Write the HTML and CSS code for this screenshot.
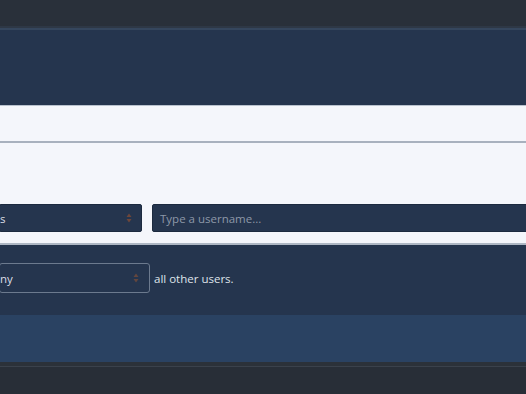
FILE: index.html
```html
<!DOCTYPE html>
<html>
<head>
<meta charset="utf-8">
<link rel="stylesheet" href="styles.css">
</head>
<body>
<div class="topbar"></div>
<div class="rule"></div>
<div class="header"></div>
<div class="panel">
  <div class="panel-head"></div>
  <div class="panel-body">
    <div class="filter-row">
      <div class="select dark-select">
        <span class="select-text">s</span>
        <svg class="arrows" width="6" height="10" viewBox="0 0 6 10"><path d="M3 0.5 L5.5 4 L0.5 4 Z M3 9.5 L5.5 6 L0.5 6 Z" fill="#6e463a"/></svg>
      </div>
      <div class="input"><span class="placeholder">Type a username...</span></div>
    </div>
  </div>
</div>
<div class="perm">
  <div class="perm-row">
    <div class="select outline-select">
      <span class="select-text">ny</span>
      <svg class="arrows" width="6" height="10" viewBox="0 0 6 10"><path d="M3 0.5 L5.5 4 L0.5 4 Z M3 9.5 L5.5 6 L0.5 6 Z" fill="#64463e"/></svg>
    </div>
    <span class="perm-text">all other users.</span>
  </div>
</div>
<div class="footer"></div>
<div class="bottom"></div>
</body>
</html>
```
FILE: styles.css
```css
html, body {
  margin: 0;
  padding: 0;
  width: 526px;
  height: 394px;
  overflow: hidden;
  background: #272d36;
  font-family: "Open Sans", "Noto Sans", sans-serif;
  font-size: 11.5px;
}
.topbar {
  height: 26px;
  background: #29303a;
}
.rule {
  height: 2px;
  background: #2e3846;
  border-bottom: 2px solid #35465d;
}
.header {
  height: 75px;
  background: #25354e;
}
.panel {
  background: #f4f6fb;
  border-top: 1px solid #b9c2ce;
  border-bottom: 2px solid #aeb7c4;
}
.panel-head {
  height: 35px;
  border-bottom: 2px solid #a8b1be;
}
.panel-body {
  height: 99px;
  display: flex;
  flex-direction: column;
  justify-content: flex-end;
  padding-bottom: 1px;
}
.filter-row {
  display: flex;
  gap: 10px;
  margin-bottom: 10px;
}
.select {
  display: flex;
  align-items: center;
  justify-content: space-between;
  box-sizing: border-box;
}
.dark-select {
  width: 143px;
  height: 28px;
  margin-left: -1px;
  background: #25354e;
  border: 1px solid #1c2a3f;
  border-radius: 2px;
  color: #d9dee6;
  padding-right: 9px;
}
.input {
  flex: 1;
  height: 28px;
  box-sizing: border-box;
  background: #25354e;
  border: 1px solid #1c2a3f;
  border-radius: 2px;
  margin-right: -6px;
  display: flex;
  align-items: center;
  padding-left: 7px;
}
.placeholder {
  color: #8d98a8;
}
.perm {
  height: 70px;
  background: #25354e;
}
.perm-row {
  display: flex;
  align-items: center;
  gap: 4px;
  padding-top: 18px;
}
.outline-select {
  width: 151px;
  height: 30px;
  margin-left: -1px;
  border: 1px solid #6c7a8e;
  border-radius: 3px;
  color: #d9dee6;
  padding-right: 10px;
}
.perm-text {
  color: #dfe4ea;
}
.footer {
  height: 47px;
  background: #2a4262;
}
.bottom {
  height: 32px;
  background: #282e37;
  border-top: 4px solid #2b3139;
  box-sizing: border-box;
}
.bottom::before {
  content: "";
  display: block;
  height: 1px;
  background: #3a414b;
}
```
